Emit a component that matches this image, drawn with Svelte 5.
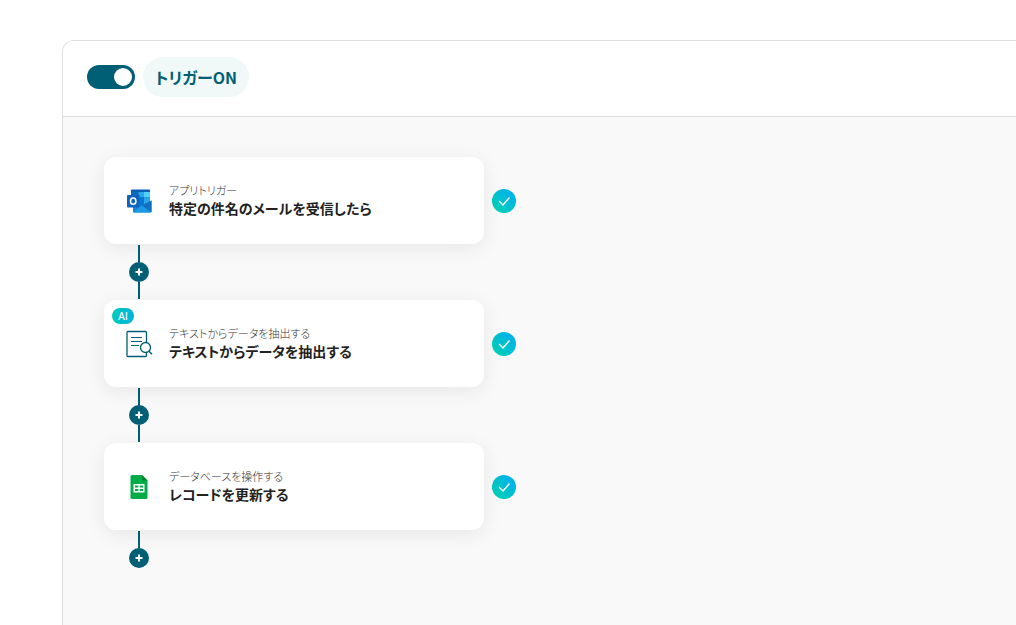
<script>
  let enabled = true;

  const steps = [
    {
      id: 'mail',
      icon: 'outlook',
      label: 'アプリトリガー',
      title: '特定の件名のメールを受信したら',
      ai: false
    },
    {
      id: 'extract',
      icon: 'document',
      label: 'テキストからデータを抽出する',
      title: 'テキストからデータを抽出する',
      ai: true
    },
    {
      id: 'update',
      icon: 'sheets',
      label: 'データベースを操作する',
      title: 'レコードを更新する',
      ai: false
    }
  ];
</script>

<main class="panel">
  <header>
    <input id="trigger" class="switch" type="checkbox" role="switch" bind:checked={enabled} />
    <label for="trigger" class="status">トリガー{enabled ? 'ON' : 'OFF'}</label>
  </header>

  <section class="flow">
    {#each steps as step, i (step.id)}
      <div class="row">
        <article class="card">
          {#if step.ai}
            <span class="ai">AI</span>
          {/if}
          {#if step.icon === 'outlook'}
            <svg class="icon" viewBox="0 0 30 30" aria-hidden="true">
              <path d="M7 4.500a1 1 0 0 1 1-1h17a1 1 0 0 1 1 1V20H7z" fill="#0a5fb4" />
              <path d="M7 6h7.500v5.500H7z" fill="#1069bd" />
              <path d="M14.500 6H20v5.500h-5.500z" fill="#28a8ea" />
              <path d="M20 6h6v5.500h-6z" fill="#50d0ff" />
              <path d="M9 11.500h5.500V20H9z" fill="#064f9c" />
              <path d="M14.500 11.500H20V20h-5.500z" fill="#0078d4" />
              <path d="M20 11.500h6V20h-6z" fill="#28a8ea" />
              <path d="M9 15l9 4.500 9.500-5v11a1 1 0 0 1-1 1H10a1 1 0 0 1-1-1z" fill="#1583d3" />
              <path d="M27.500 14.500v11a1 1 0 0 1-.4.800L18 19.500z" fill="#0f6fc0" />
              <path d="M9.400 26.300L18 19.500l9 6.800-.5.200H10z" fill="#1c9ae6" />
              <rect x="3" y="9" width="12.500" height="12.500" rx="1" fill="#0f62bd" />
              <ellipse cx="9.200" cy="15.200" rx="2.700" ry="3.100" fill="none" stroke="#fff" stroke-width="1.500" />
            </svg>
          {:else if step.icon === 'document'}
            <svg class="icon line" viewBox="0 0 30 30" aria-hidden="true">
              <path d="M22.500 14V3.500a1 1 0 0 0-1-1H4a1 1 0 0 0-1 1v23a1 1 0 0 0 1 1h17.500a1 1 0 0 0 1-1v-3" />
              <path d="M7 8.500h11M7 12.500h11M7 16.500h8" stroke-width="1" />
              <circle cx="21.500" cy="18.500" r="5" />
              <path d="M25 22.200l3 3" stroke-width="1.600" />
            </svg>
          {:else}
            <svg class="icon" viewBox="0 0 30 30" aria-hidden="true">
              <path d="M8 3h10l5.500 5.500v17a1.500 1.500 0 0 1-1.500 1.500H8A1.500 1.500 0 0 1 6.500 25.500v-21A1.500 1.500 0 0 1 8 3z" fill="#00ac47" />
              <path d="M18 3l5.500 5.500h-4A1.500 1.500 0 0 1 18 7z" fill="#00832d" />
              <path d="M9.500 12h11v8.500h-11zM11 13.500v2h3.300v-2zM15.700 13.500v2H19v-2zM11 17v2h3.300v-2zM15.700 17v2H19v-2z" fill="#fff" fill-rule="evenodd" />
            </svg>
          {/if}
          <div class="text">
            <p>{step.label}</p>
            <h2>{step.title}</h2>
          </div>
        </article>
        <svg class="check" viewBox="0 0 24 24" role="img" aria-label="完了">
          <defs>
            <linearGradient id="done-{step.id}" x1="0" y1="1" x2="1" y2="0">
              <stop offset="0.1" stop-color="#00d2b4" />
              <stop offset="0.9" stop-color="#00aeef" />
            </linearGradient>
          </defs>
          <circle cx="12" cy="12" r="12" fill="url(#done-{step.id})" />
          <path d="M7 12l4 4 6.500-7.500" fill="none" stroke="#fff" stroke-width="1.400" />
        </svg>
      </div>
      <div class="connector" class:last={i === steps.length - 1}>
        <button type="button" aria-label="ステップを追加">
          <svg viewBox="0 0 20 20" aria-hidden="true">
            <path d="M10 6.500v7M6.500 10h7" stroke="#fff" stroke-width="2" />
          </svg>
        </button>
      </div>
    {/each}
  </section>
</main>

<style>
  :global(body) {
    margin: 0;
    background: #fff;
  }
  .panel {
    display: flex;
    flex-direction: column;
    box-sizing: border-box;
    min-height: calc(100vh - 40px);
    margin: 40px 0 0 62px;
    border: 1px solid #dedede;
    border-width: 1px 0 0 1px;
    border-radius: 12px 0 0 0;
    overflow: hidden;
    color: #222;
    font-family: 'Noto Sans CJK JP', sans-serif;
    font-feature-settings: 'palt';
  }
  header {
    display: flex;
    align-items: center;
    gap: 8px;
    padding: 16px 24px 19px;
    border-bottom: 1px solid #dedede;
    background: #fff;
  }
  .switch {
    appearance: none;
    display: flex;
    align-items: center;
    box-sizing: border-box;
    width: 48px;
    height: 24px;
    margin: 0;
    padding: 3px;
    border-radius: 12px;
    background: #b5bfc2;
    cursor: pointer;
  }
  .switch::before {
    content: '';
    width: 18px;
    height: 18px;
    border-radius: 50%;
    background: #fff;
  }
  .switch:checked {
    justify-content: flex-end;
    background: #005f75;
  }
  .status {
    padding: 0 12px;
    border-radius: 20px;
    background: #f0f9f8;
    color: #005f75;
    font-size: 16px;
    font-weight: 700;
    line-height: 40px;
  }
  .flow {
    flex: 1;
    padding: 40px 41px;
    background: #f9f9f9;
  }
  .row {
    display: flex;
    align-items: center;
    gap: 8px;
  }
  .card {
    position: relative;
    display: flex;
    align-items: center;
    gap: 15px;
    box-sizing: border-box;
    width: 380px;
    min-height: 87px;
    padding: 20px;
    border-radius: 12px;
    background: #fff;
    box-shadow: 0 4px 20px rgba(0, 0, 0, 0.08);
  }
  .icon {
    flex: none;
    width: 30px;
    height: 30px;
  }
  .line {
    fill: none;
    stroke: #005f75;
    stroke-width: 1.3;
  }
  .text {
    padding-bottom: 4px;
  }
  .text p {
    margin: 0;
    color: #333;
    font-size: 11px;
    font-weight: 300;
    line-height: 18px;
  }
  .text h2 {
    margin: 0;
    font-size: 14px;
    font-weight: 700;
    line-height: 18px;
  }
  .ai {
    position: absolute;
    top: 8px;
    left: 8px;
    padding: 0 6px;
    border-radius: 8px;
    background: linear-gradient(90deg, #00cbb8, #00b2e3);
    color: #fff;
    font-family: Inter, sans-serif;
    font-size: 10px;
    font-weight: 500;
    line-height: 16px;
  }
  .check {
    flex: none;
    width: 24px;
    height: 24px;
  }
  .connector {
    display: flex;
    flex-direction: column;
    align-items: center;
    width: 70px;
    padding: 1px 0;
  }
  .connector::before,
  .connector::after {
    content: '';
    width: 2px;
    height: 17px;
    background: #005f75;
  }
  .connector.last::after {
    display: none;
  }
  .connector button {
    width: 20px;
    height: 20px;
    padding: 0;
    border: 0;
    border-radius: 50%;
    background: #005f75;
    cursor: pointer;
  }
  .connector svg {
    display: block;
  }
</style>
